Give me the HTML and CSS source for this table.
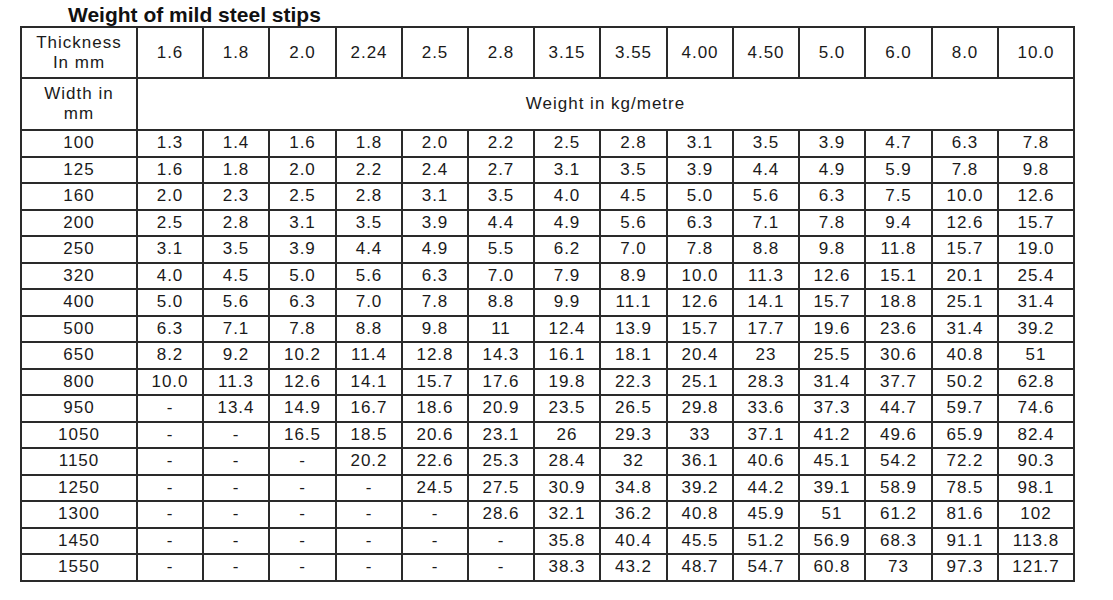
FILE: index.html
```html
<!DOCTYPE html>
<html>
<head>
<meta charset="utf-8">
<link rel="stylesheet" href="styles.css">
</head>
<body>
<h1 class="title">Weight of mild steel stips</h1>
<table class="weights">
<colgroup>
<col class="c116"><col class="c66"><col class="c66"><col class="c67"><col class="c66"><col class="c66"><col class="c66"><col class="c66"><col class="c67"><col class="c66"><col class="c66"><col class="c66"><col class="c67"><col class="c66"><col class="c76">
</colgroup>
<tr class="head">
<td class="label">Thickness<br>In mm</td><td>1.6</td><td>1.8</td><td>2.0</td><td>2.24</td><td>2.5</td><td>2.8</td><td>3.15</td><td>3.55</td><td>4.00</td><td>4.50</td><td>5.0</td><td>6.0</td><td>8.0</td><td>10.0</td>
</tr>
<tr class="sub">
<td class="label">Width in<br>mm</td><td colspan="14">Weight in kg/metre</td>
</tr>
<tr><td>100</td><td>1.3</td><td>1.4</td><td>1.6</td><td>1.8</td><td>2.0</td><td>2.2</td><td>2.5</td><td>2.8</td><td>3.1</td><td>3.5</td><td>3.9</td><td>4.7</td><td>6.3</td><td>7.8</td></tr>
<tr><td>125</td><td>1.6</td><td>1.8</td><td>2.0</td><td>2.2</td><td>2.4</td><td>2.7</td><td>3.1</td><td>3.5</td><td>3.9</td><td>4.4</td><td>4.9</td><td>5.9</td><td>7.8</td><td>9.8</td></tr>
<tr><td>160</td><td>2.0</td><td>2.3</td><td>2.5</td><td>2.8</td><td>3.1</td><td>3.5</td><td>4.0</td><td>4.5</td><td>5.0</td><td>5.6</td><td>6.3</td><td>7.5</td><td>10.0</td><td>12.6</td></tr>
<tr><td>200</td><td>2.5</td><td>2.8</td><td>3.1</td><td>3.5</td><td>3.9</td><td>4.4</td><td>4.9</td><td>5.6</td><td>6.3</td><td>7.1</td><td>7.8</td><td>9.4</td><td>12.6</td><td>15.7</td></tr>
<tr><td>250</td><td>3.1</td><td>3.5</td><td>3.9</td><td>4.4</td><td>4.9</td><td>5.5</td><td>6.2</td><td>7.0</td><td>7.8</td><td>8.8</td><td>9.8</td><td>11.8</td><td>15.7</td><td>19.0</td></tr>
<tr><td>320</td><td>4.0</td><td>4.5</td><td>5.0</td><td>5.6</td><td>6.3</td><td>7.0</td><td>7.9</td><td>8.9</td><td>10.0</td><td>11.3</td><td>12.6</td><td>15.1</td><td>20.1</td><td>25.4</td></tr>
<tr><td>400</td><td>5.0</td><td>5.6</td><td>6.3</td><td>7.0</td><td>7.8</td><td>8.8</td><td>9.9</td><td>11.1</td><td>12.6</td><td>14.1</td><td>15.7</td><td>18.8</td><td>25.1</td><td>31.4</td></tr>
<tr><td>500</td><td>6.3</td><td>7.1</td><td>7.8</td><td>8.8</td><td>9.8</td><td>11</td><td>12.4</td><td>13.9</td><td>15.7</td><td>17.7</td><td>19.6</td><td>23.6</td><td>31.4</td><td>39.2</td></tr>
<tr><td>650</td><td>8.2</td><td>9.2</td><td>10.2</td><td>11.4</td><td>12.8</td><td>14.3</td><td>16.1</td><td>18.1</td><td>20.4</td><td>23</td><td>25.5</td><td>30.6</td><td>40.8</td><td>51</td></tr>
<tr><td>800</td><td>10.0</td><td>11.3</td><td>12.6</td><td>14.1</td><td>15.7</td><td>17.6</td><td>19.8</td><td>22.3</td><td>25.1</td><td>28.3</td><td>31.4</td><td>37.7</td><td>50.2</td><td>62.8</td></tr>
<tr><td>950</td><td>-</td><td>13.4</td><td>14.9</td><td>16.7</td><td>18.6</td><td>20.9</td><td>23.5</td><td>26.5</td><td>29.8</td><td>33.6</td><td>37.3</td><td>44.7</td><td>59.7</td><td>74.6</td></tr>
<tr><td>1050</td><td>-</td><td>-</td><td>16.5</td><td>18.5</td><td>20.6</td><td>23.1</td><td>26</td><td>29.3</td><td>33</td><td>37.1</td><td>41.2</td><td>49.6</td><td>65.9</td><td>82.4</td></tr>
<tr><td>1150</td><td>-</td><td>-</td><td>-</td><td>20.2</td><td>22.6</td><td>25.3</td><td>28.4</td><td>32</td><td>36.1</td><td>40.6</td><td>45.1</td><td>54.2</td><td>72.2</td><td>90.3</td></tr>
<tr><td>1250</td><td>-</td><td>-</td><td>-</td><td>-</td><td>24.5</td><td>27.5</td><td>30.9</td><td>34.8</td><td>39.2</td><td>44.2</td><td>39.1</td><td>58.9</td><td>78.5</td><td>98.1</td></tr>
<tr><td>1300</td><td>-</td><td>-</td><td>-</td><td>-</td><td>-</td><td>28.6</td><td>32.1</td><td>36.2</td><td>40.8</td><td>45.9</td><td>51</td><td>61.2</td><td>81.6</td><td>102</td></tr>
<tr><td>1450</td><td>-</td><td>-</td><td>-</td><td>-</td><td>-</td><td>-</td><td>35.8</td><td>40.4</td><td>45.5</td><td>51.2</td><td>56.9</td><td>68.3</td><td>91.1</td><td>113.8</td></tr>
<tr><td>1550</td><td>-</td><td>-</td><td>-</td><td>-</td><td>-</td><td>-</td><td>38.3</td><td>43.2</td><td>48.7</td><td>54.7</td><td>60.8</td><td>73</td><td>97.3</td><td>121.7</td></tr>
</table>
</body>
</html>
```
FILE: styles.css
```css
html, body {
  margin: 0;
  padding: 0;
  background: #ffffff;
}
body {
  font-family: "Liberation Sans", Arial, sans-serif;
  color: #1a1a1a;
}
.title {
  margin: 3px 0 0 68px;
  font-size: 21px;
  line-height: 23px;
  font-weight: bold;
  color: #111111;
}
.weights {
  margin-left: 20px;
  width: 1053px;
  table-layout: fixed;
  border-collapse: collapse;
  font-size: 17px;
  letter-spacing: 1px;
}
.c116 { width: 116px; }
.c66 { width: 66px; }
.c67 { width: 67px; }
.c76 { width: 76px; }
.weights td {
  border: 2px solid #2a2a2a;
  padding: 0;
  text-align: center;
  vertical-align: middle;
  height: 24.5px;
  line-height: 20px;
  white-space: nowrap;
}
.weights tr.head td {
  height: 49px;
}
.weights tr.sub td {
  height: 50px;
}
```
